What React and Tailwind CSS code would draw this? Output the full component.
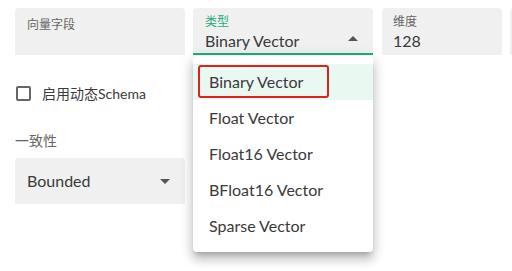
import React from 'react';

const options = ['Binary Vector', 'Float Vector', 'Float16 Vector', 'BFloat16 Vector', 'Sparse Vector'];

export default function App() {
  return (
    <div className="relative w-[512px] h-[271px] bg-white overflow-hidden text-[#3a3a3a]" style={{ fontFamily: '"Lato", "Noto Sans CJK SC", sans-serif' }}>
      {/* top row of fields */}
      <div className="flex pt-2 pl-[15px]">
        <div className="shrink-0 w-[170px] h-[47px] bg-[#f0f0f0] rounded-t px-3 pt-[9px]">
          <div className="text-[12px] leading-[16px] text-[#666]">向量字段</div>
        </div>
        <div className="shrink-0 ml-2 w-[180px] h-[47px] bg-[#f0f0f0] rounded-t border-b-2 border-[#1fae7b] px-3 pt-[7px] flex items-start justify-between">
          <div>
            <div className="text-[12px] leading-[14px] text-[#1fae7b]">类型</div>
            <div className="text-[16px] leading-[22px] mt-[1px]">Binary Vector</div>
          </div>
          <svg width="10" height="5" viewBox="0 0 10 5" className="mt-[21px] mr-[3px]">
            <path d="M0 5 L5 0 L10 5 Z" fill="#555" />
          </svg>
        </div>
        <div className="shrink-0 ml-[9px] w-[120px] h-[47px] bg-[#f0f0f0] rounded-t px-[11px] pt-[7px]">
          <div className="text-[12px] leading-[14px] text-[#666]">维度</div>
          <div className="text-[16px] leading-[22px] mt-[1px]">128</div>
        </div>
        <div className="shrink-0 ml-2 w-[120px] h-[47px] bg-[#f0f0f0] rounded-t" />
      </div>

      {/* checkbox */}
      <div className="flex items-center h-6 mt-[26px] pl-[16px]">
        <div className="w-[15px] h-[15px] border-2 border-[#666] rounded-[2px]" />
        <span className="ml-[11px] text-[14px]">启用动态Schema</span>
      </div>

      {/* consistency */}
      <div className="mt-[26px] pl-[15px] text-[14px] leading-5 text-[#666]">一致性</div>
      <div className="ml-[15px] mt-[7px] w-[170px] h-[46px] bg-[#f0f0f0] rounded-t flex items-center justify-between pl-3 pr-[15px]">
        <span className="text-[16px]">Bounded</span>
        <svg width="10" height="5" viewBox="0 0 10 5">
          <path d="M0 0 L5 5 L10 0 Z" fill="#555" />
        </svg>
      </div>

      {/* dropdown menu */}
      <div className="absolute left-[193px] top-[56px] w-[180px] bg-white rounded py-2 shadow-[0_5px_5px_-3px_rgba(0,0,0,0.2),0_8px_10px_1px_rgba(0,0,0,0.14),0_3px_14px_2px_rgba(0,0,0,0.12)]">
        {options.map((o, i) => (
          <div key={o} className={`h-9 flex items-center px-4 text-[16px] ${i === 0 ? 'bg-[#eaf8f2]' : ''}`}>
            {o}
          </div>
        ))}
        <div className="absolute left-[5px] top-[9px] w-[131px] h-[33px] border-2 border-[#e0201c] rounded-[3px]" />
      </div>
    </div>
  );
}
